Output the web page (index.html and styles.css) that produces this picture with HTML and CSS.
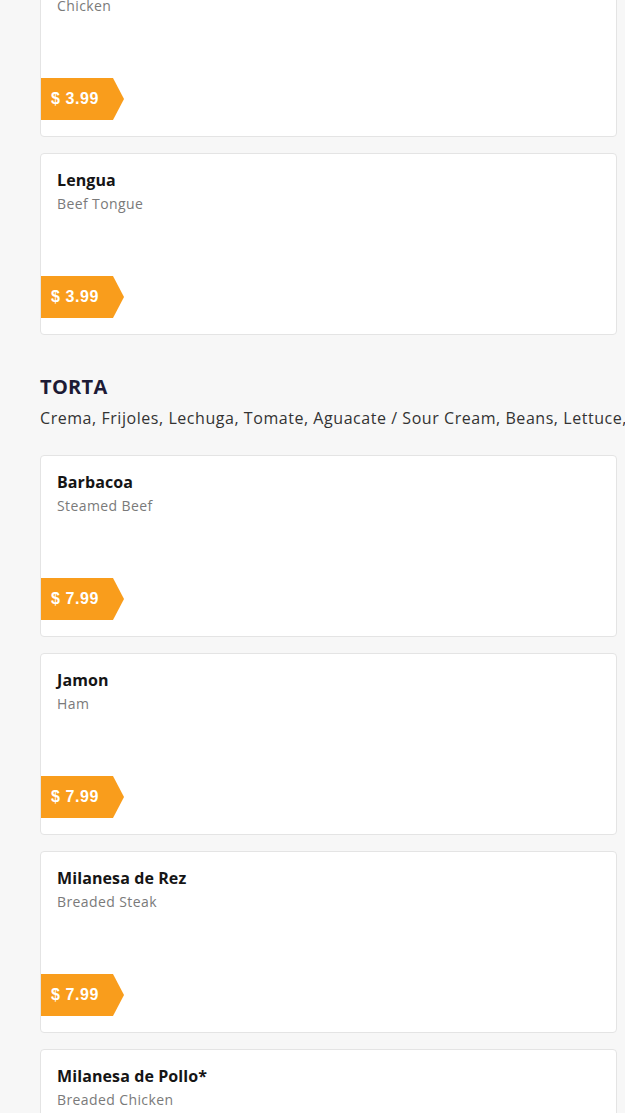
FILE: index.html
```html
<!DOCTYPE html>
<html>
<head>
<meta charset="utf-8">
<link rel="stylesheet" href="styles.css">
</head>
<body>
<main class="menu">
  <div class="list list-first">
    <div class="card">
      <div class="name">Pollo</div>
      <div class="desc">Chicken</div>
      <div class="price">$ 3.99</div>
    </div>
    <div class="card">
      <div class="name">Lengua</div>
      <div class="desc">Beef Tongue</div>
      <div class="price">$ 3.99</div>
    </div>
  </div>

  <section class="section">
    <h2 class="sec-title">TORTA</h2>
    <p class="sec-desc">Crema, Frijoles, Lechuga, Tomate, Aguacate / Sour Cream, Beans, Lettuce, Tomato, Avocado</p>
  </section>

  <div class="list">
    <div class="card">
      <div class="name">Barbacoa</div>
      <div class="desc">Steamed Beef</div>
      <div class="price">$ 7.99</div>
    </div>
    <div class="card">
      <div class="name">Jamon</div>
      <div class="desc">Ham</div>
      <div class="price">$ 7.99</div>
    </div>
    <div class="card">
      <div class="name">Milanesa de Rez</div>
      <div class="desc">Breaded Steak</div>
      <div class="price">$ 7.99</div>
    </div>
    <div class="card">
      <div class="name">Milanesa de Pollo*</div>
      <div class="desc">Breaded Chicken</div>
      <div class="price">$ 7.99</div>
    </div>
  </div>
</main>
</body>
</html>
```
FILE: styles.css
```css
html, body {
  margin: 0;
  padding: 0;
  overflow: hidden;
  background: #f7f7f7;
}
body {
  font-family: "Open Sans", "Liberation Sans", sans-serif;
  width: 625px;
  height: 1113px;
}
.menu {
  padding: 0 8px 0 40px;
}
.list {
  display: flex;
  flex-direction: column;
  gap: 16px;
}
.list-first {
  margin-top: -45px;
}
.card {
  background: #fff;
  border: 1px solid #e4e4e4;
  border-radius: 4px;
  height: 182px;
  box-sizing: border-box;
  display: flex;
  flex-direction: column;
}
.name {
  padding: 14px 16px 0;
  font-weight: 700;
  font-size: 16px;
  line-height: 25px;
  color: #151515;
  letter-spacing: 0.1px;
}
.desc {
  padding: 0 16px;
  font-size: 14px;
  line-height: 22px;
  color: #7a7a7a;
  letter-spacing: 0.4px;
}
.price {
  margin-top: auto;
  margin-bottom: 16px;
  width: 83px;
  height: 42px;
  box-sizing: border-box;
  padding-left: 10px;
  display: flex;
  align-items: center;
  background: #f99d1c;
  color: #fff;
  font-family: "Liberation Sans", Arial, sans-serif;
  font-weight: 700;
  font-size: 16px;
  letter-spacing: 0.6px;
  clip-path: polygon(0 0, 72px 0, 100% 50%, 72px 100%, 0 100%);
}
.section {
  margin: 37px 0 24px;
}
.sec-title {
  margin: 0;
  font-size: 20px;
  line-height: 30px;
  font-weight: 700;
  color: #1d1b36;
  letter-spacing: 0.3px;
}
.sec-desc {
  margin: 3px 0 0;
  font-size: 16px;
  line-height: 26px;
  color: #333;
  white-space: nowrap;
  letter-spacing: 0.55px;
}
```
